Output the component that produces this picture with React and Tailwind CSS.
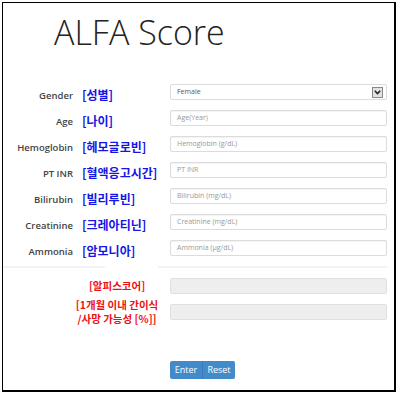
const FIELDS = [
	{ en: "Age", ko: "[나이]", ph: "Age(Year)" },
	{ en: "Hemoglobin", ko: "[헤모글로빈]", ph: "Hemoglobin (g/dL)" },
	{ en: "PT INR", ko: "[혈액응고시간]", ph: "PT INR" },
	{ en: "Bilirubin", ko: "[빌리루빈]", ph: "Bilirubin (mg/dL)" },
	{ en: "Creatinine", ko: "[크레아티닌]", ph: "Creatinine (mg/dL)" },
	{ en: "Ammonia", ko: "[암모니아]", ph: "Ammonia (μg/dL)" },
];

const enFont = { fontFamily: "'Open Sans', 'Liberation Sans', sans-serif" };

function Row({ en, ko, children }) {
	return (
		<div className='flex h-[16px] items-start mb-[10px]'>
			<div className='w-[70px] mt-[5px] text-right text-[9.5px] leading-[13px] font-semibold text-[#444]'>{en}</div>
			<div className='w-[88px] ml-[9px] mt-[3px] text-[12px] leading-[16px] font-bold text-[#1515e6] whitespace-nowrap font-["Noto_Sans_CJK_KR",sans-serif]'>
				{ko}
			</div>
			{children}
		</div>
	);
}

function Field({ ph, disabled }) {
	return (
		<div
			className={
				"w-[217px] h-[16px] rounded-[2px] border flex items-center px-[6px] text-[7px] text-[#999] " +
				(disabled ? "bg-[#eeeeee] border-[#e0e0e0]" : "bg-white border-[#dcdcdc] shadow-[inset_0_1px_1px_rgba(0,0,0,0.05)]")
			}>
			{ph}
		</div>
	);
}

export default function App() {
	return (
		<div className='w-[397px] h-[393px] bg-white pt-[2px] pl-[2px] font-["Open_Sans","Liberation_Sans",sans-serif]'>
			<div className='w-[394px] h-[390px] border border-black border-r-2 border-b-2 relative'>
				{/* Title */}
				<h1 className='pl-[51px] pt-[5px] h-[81px] text-[34px] leading-[48px] font-light text-[#222]' style={enFont}>
					ALFA Score
				</h1>

				{/* Inputs */}
				<Row en='Gender' ko='[성별]'>
					<div className='w-[217px] h-[16px] rounded-[2px] border border-[#dcdcdc] bg-white flex items-center pl-[6px] pr-[3px] text-[7px] text-[#555]'>
						<span className='flex-1'>Female</span>
						<span className='w-[11px] h-[11px] border border-[#888] bg-[#e2e2e2] flex items-center justify-center'>
							<svg width='7' height='5' viewBox='0 0 7 5'>
								<path d='M0.8 0.8 L3.5 3.6 L6.2 0.8' fill='none' stroke='#222' strokeWidth='1.5' />
							</svg>
						</span>
					</div>
				</Row>
				{FIELDS.map((f) => (
					<Row key={f.en} en={f.en} ko={f.ko}>
						<Field ph={f.ph} />
					</Row>
				))}

				{/* Divider */}
				<div className='flex mt-[1px] h-[2px]'>
					<div className='w-[102px] bg-[#f2f2f2]' />
					<div className='w-[53px]' />
					<div className='w-[229px] bg-[#f2f2f2]' />
				</div>

				{/* Results */}
				<div className='flex items-center mt-[10px] h-[16px]'>
					<div className='w-[100px] ml-[64px] text-center text-[10.5px] leading-[16px] font-bold text-[#ee1111] font-["Noto_Sans_CJK_KR",sans-serif]'>
						[알피스코어]
					</div>
					<div className='ml-[3px]'>
						<Field disabled />
					</div>
				</div>
				<div className='flex items-center mt-[10px] h-[16px]'>
					<div className='w-[100px] ml-[64px] text-center text-[10.5px] leading-[14px] font-bold text-[#ee1111] whitespace-nowrap font-["Noto_Sans_CJK_KR",sans-serif]'>
						[1개월 이내 간이식
						<br />
						/사망 가능성 [%]]
					</div>
					<div className='ml-[3px]'>
						<Field disabled />
					</div>
				</div>

				{/* Buttons */}
				<div className='flex mt-[41px] ml-[167px]'>
					<div className='flex h-[18px] rounded-[2px] overflow-hidden bg-[#428bca] text-white text-[9px] leading-[18px]'>
						<button className='w-[33px] text-center border-r border-[#3a7cb6]'>Enter</button>
						<button className='w-[32px] text-center'>Reset</button>
					</div>
				</div>
			</div>
		</div>
	);
}
